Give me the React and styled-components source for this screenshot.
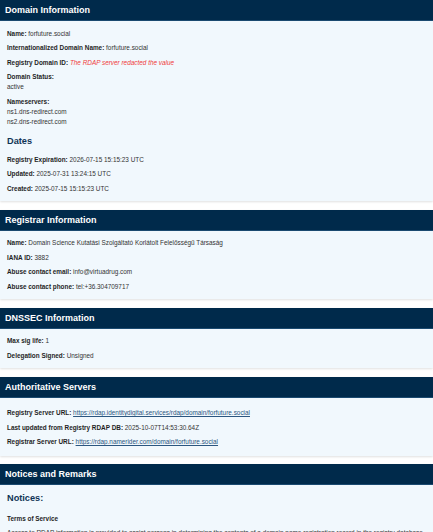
import React from "react";
import styled, { createGlobalStyle } from "styled-components";

const COLORS = {
  navy: "#002a4b",
  navyEdge: "#1b4a70",
  panel: "#f1f8fd",
  text: "#333333",
  label: "#1f1f1f",
  heading: "#0f3456",
  red: "#f03a3a",
  link: "#2b5680",
};

const GlobalStyle = createGlobalStyle`
  html, body {
    margin: 0;
    padding: 0;
    background: #ffffff;
  }
  body {
    font-family: "Liberation Sans", Arial, sans-serif;
    color: ${COLORS.text};
  }
`;

const Page = styled.main`
  display: flex;
  flex-direction: column;
  gap: 8.5px;
`;

const Section = styled.section`
  background: ${COLORS.panel};
  box-shadow: 0 1px 2px rgba(0, 0, 0, 0.12);
`;

const SectionHeader = styled.h2`
  margin: 0;
  height: 21px;
  box-sizing: border-box;
  display: flex;
  align-items: center;
  padding: 0 5px;
  background: ${COLORS.navy};
  border-bottom: 1px solid ${COLORS.navyEdge};
  color: #ffffff;
  font-size: 9px;
  font-weight: 700;
`;

const Body = styled.div`
  padding: ${(p) => (p.$roomy ? "10.5px 7px 4px" : "7.5px 7px 3px")};
`;

const Field = styled.p`
  margin: 0 0 4.5px;
  font-size: 6.4px;
  line-height: 10px;
  color: ${COLORS.text};
  white-space: nowrap;
`;

const Label = styled.strong`
  font-weight: 700;
  color: ${COLORS.label};
`;

const Redacted = styled.em`
  color: ${COLORS.red};
`;

const Link = styled.a`
  color: ${COLORS.link};
  text-decoration: underline;
`;

const SubHeading = styled.h3`
  margin: 8.5px 0 6.5px;
  font-size: 9.2px;
  line-height: 13px;
  font-weight: 700;
  color: ${COLORS.heading};
`;

const NoticesHeading = styled(SubHeading)`
  margin: 0 0 10.5px;
  line-height: 11px;
`;

const NoticeTitle = styled.h4`
  margin: 0 0 4px;
  font-size: 6.4px;
  line-height: 10px;
  font-weight: 700;
  color: ${COLORS.label};
`;

const NoticeText = styled.p`
  margin: 0 0 4.5px;
  font-size: 6.4px;
  line-height: 10px;
  color: ${COLORS.text};
`;

const Row = ({ label, children }) => (
  <Field>
    <Label>{label}:</Label> {children}
  </Field>
);

const Block = ({ label, lines }) => (
  <Field>
    <Label>{label}:</Label>
    {lines.map((l) => (
      <React.Fragment key={l}>
        <br />
        {l}
      </React.Fragment>
    ))}
  </Field>
);

export default function App() {
  return (
    <>
      <GlobalStyle />
      <Page>
        <Section>
          <SectionHeader>Domain Information</SectionHeader>
          <Body>
            <Row label="Name">forfuture.social</Row>
            <Row label="Internationalized Domain Name">forfuture.social</Row>
            <Row label="Registry Domain ID">
              <Redacted>The RDAP server redacted the value</Redacted>
            </Row>
            <Block label="Domain Status" lines={["active"]} />
            <Block
              label="Nameservers"
              lines={["ns1.dns-redirect.com", "ns2.dns-redirect.com"]}
            />
            <SubHeading>Dates</SubHeading>
            <Row label="Registry Expiration">2026-07-15 15:15:23 UTC</Row>
            <Row label="Updated">2025-07-31 13:24:15 UTC</Row>
            <Row label="Created">2025-07-15 15:15:23 UTC</Row>
          </Body>
        </Section>

        <Section>
          <SectionHeader>Registrar Information</SectionHeader>
          <Body>
            <Row label="Name">
              Domain Science Kutatási Szolgáltató Korlátolt Felelősségű Társaság
            </Row>
            <Row label="IANA ID">3882</Row>
            <Row label="Abuse contact email">info@virtuadrug.com</Row>
            <Row label="Abuse contact phone">tel:+36.304709717</Row>
          </Body>
        </Section>

        <Section>
          <SectionHeader>DNSSEC Information</SectionHeader>
          <Body>
            <Row label="Max sig life">1</Row>
            <Row label="Delegation Signed">Unsigned</Row>
          </Body>
        </Section>

        <Section>
          <SectionHeader>Authoritative Servers</SectionHeader>
          <Body $roomy>
            <Row label="Registry Server URL">
              <Link href="#">
                https://rdap.identitydigital.services/rdap/domain/forfuture.social
              </Link>
            </Row>
            <Row label="Last updated from Registry RDAP DB">
              2025-10-07T14:53:30.64Z
            </Row>
            <Row label="Registrar Server URL">
              <Link href="#">https://rdap.namerider.com/domain/forfuture.social</Link>
            </Row>
          </Body>
        </Section>

        <Section>
          <SectionHeader>Notices and Remarks</SectionHeader>
          <Body>
            <NoticesHeading>Notices:</NoticesHeading>
            <NoticeTitle>Terms of Service</NoticeTitle>
            <NoticeText>
              Access to RDAP information is provided to assist persons in
              determining the contents of a domain name registration record in
              the registry database. The data in this record is provided by
              Identity Digital or the Registry Operator for informational
              purposes only, and accuracy is not guaranteed.
            </NoticeText>
          </Body>
        </Section>
      </Page>
    </>
  );
}
